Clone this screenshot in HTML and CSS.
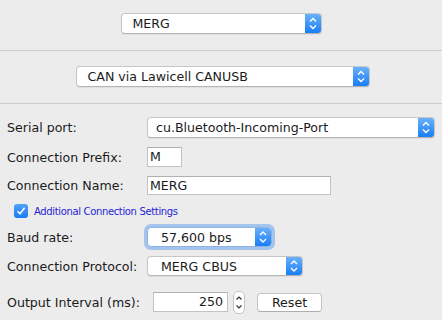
FILE: index.html
```html
<!DOCTYPE html>
<html lang="en">
<head>
  <meta charset="UTF-8" />
  <title>Connection Settings</title>
  <link rel="stylesheet" href="styles.css">
</head>
<body>

  <div class="pane">

    <!-- System manufacturer -->
    <div class="top">
      <div class="select sel-merg">
        <span class="sel-text">MERG</span>
        <span class="sel-arrows"><svg viewBox="0 0 16 21" width="16" height="21"><path d="M5 8.5L8 5.5L11 8.5M5 12.5L8 15.5L11 12.5"/></svg></span>
      </div>
    </div>
    <div class="sep"></div>

    <!-- Connection type -->
    <div class="mid">
      <div class="select sel-can">
        <span class="sel-text">CAN via Lawicell CANUSB</span>
        <span class="sel-arrows"><svg viewBox="0 0 16 21" width="16" height="21"><path d="M5 8.5L8 5.5L11 8.5M5 12.5L8 15.5L11 12.5"/></svg></span>
      </div>
    </div>
    <div class="sep"></div>

    <!-- Settings form -->
    <div class="form">
      <div class="row r-serial">
        <span class="label">Serial port:</span>
        <div class="select sel-serial">
          <span class="sel-text">cu.Bluetooth-Incoming-Port</span>
          <span class="sel-arrows"><svg viewBox="0 0 16 21" width="16" height="21"><path d="M5 8.5L8 5.5L11 8.5M5 12.5L8 15.5L11 12.5"/></svg></span>
        </div>
      </div>

      <div class="row r-prefix">
        <span class="label">Connection Prefix:</span>
        <div class="input in-prefix">M</div>
      </div>

      <div class="row r-name">
        <span class="label">Connection Name:</span>
        <div class="input in-name">MERG</div>
      </div>

      <div class="row r-check">
        <span class="checkbox"><svg viewBox="0 0 14 14" width="14" height="14"><path d="M3.5 7.2L6 9.8L10.6 3.8"/></svg></span>
        <span class="check-text">Additional Connection Settings</span>
      </div>

      <div class="row r-baud">
        <span class="label">Baud rate:</span>
        <div class="select sel-baud focused">
          <span class="sel-text">57,600 bps</span>
          <span class="sel-arrows"><svg viewBox="0 0 16 20" width="16" height="20"><path d="M5 8L8 5L11 8M5 12L8 15L11 12"/></svg></span>
        </div>
      </div>

      <div class="row r-proto">
        <span class="label">Connection Protocol:</span>
        <div class="select sel-proto">
          <span class="sel-text">MERG CBUS</span>
          <span class="sel-arrows"><svg viewBox="0 0 16 20" width="16" height="20"><path d="M5 8L8 5L11 8M5 12L8 15L11 12"/></svg></span>
        </div>
      </div>

      <div class="row r-output">
        <span class="label label-output">Output Interval (ms):</span>
        <div class="input in-output">250</div>
        <span class="stepper"><svg viewBox="0 0 12 23" width="12" height="23"><path d="M3.5 8.5L6 6L8.5 8.5M3.5 14.5L6 17L8.5 14.5"/></svg></span>
        <button class="btn-reset">Reset</button>
      </div>
    </div>

  </div>

</body>
</html>
```

FILE: styles.css
```css
body {
  margin: 0;
  background: #ececec;
  font-family: "DejaVu Sans", "Liberation Sans", sans-serif;
  font-size: 12.6px;
  color: #1b1b1b;
}

.pane {
  width: 442px;
  height: 320px;
  overflow: hidden;
}

.sep {
  height: 1px;
  background: #cdcdcd;
}

.top {
  height: 50px;
  box-sizing: border-box;
  padding-top: 13px;
  display: flex;
  justify-content: center;
}

.mid {
  height: 52px;
  box-sizing: border-box;
  padding-top: 15px;
  display: flex;
  justify-content: center;
  padding-left: 3px;
}

/* popup buttons */
.select {
  display: flex;
  align-items: center;
  height: 21px;
  box-sizing: border-box;
  background: #fff;
  border: 1px solid #c6c6c6;
  border-bottom-color: #b4b4b4;
  border-radius: 4px;
  box-shadow: 0 1px 1px rgba(0, 0, 0, 0.06);
  overflow: hidden;
}

.sel-text {
  flex: 1;
  padding-left: 11px;
  white-space: nowrap;
}

.sel-arrows {
  width: 16px;
  height: 100%;
  display: flex;
  align-items: center;
  justify-content: center;
  background: linear-gradient(#69b1fa, #1a7df6);
}

.sel-arrows svg path {
  fill: none;
  stroke: #fff;
  stroke-width: 1.4;
}

.sel-merg { width: 201px; }
.sel-can { width: 294px; }
.sel-serial { width: 288px; }
.sel-serial .sel-text { padding-left: 8px; }
.sel-baud { width: 125px; height: 20px; }
.sel-proto { width: 156px; height: 20px; }
.sel-baud .sel-text,
.sel-proto .sel-text { padding-left: 13px; }

.focused {
  box-shadow: 0 0 0 3px rgba(108, 164, 236, 0.55);
  border-color: #8fb2e4;
}

/* form */
.form {
  padding-top: 13px;
}

.row {
  display: flex;
  align-items: center;
  padding-left: 7px;
}

.label {
  width: 140px;
  flex-shrink: 0;
}

.r-serial { height: 21px; }
.r-prefix { height: 20px; margin-top: 9px; }
.r-name { height: 20px; margin-top: 8px; }
.r-check { height: 14px; margin-top: 9px; padding-left: 14px; }
.r-baud { height: 20px; margin-top: 9px; }
.r-proto { height: 20px; margin-top: 9px; }
.r-output { height: 20px; margin-top: 16px; }

.input {
  height: 20px;
  box-sizing: border-box;
  background: #fff;
  border: 1px solid #c2c2c2;
  border-top-color: #b0b0b0;
  padding-left: 2px;
  line-height: 18px;
  white-space: nowrap;
}

.in-prefix { width: 35px; }
.in-name { width: 184px; height: 19px; line-height: 17px; }

.label-output { width: 146px; }
.in-output {
  width: 75px;
  text-align: right;
  padding-right: 4px;
  padding-left: 0;
}

.stepper {
  margin-left: 5px;
  width: 12px;
  height: 23px;
  box-sizing: border-box;
  background: #fff;
  border: 1px solid #c4c4c4;
  border-radius: 5px;
  display: flex;
  align-items: center;
  justify-content: center;
}

.stepper svg {
  flex-shrink: 0;
}

.stepper svg path {
  fill: none;
  stroke: #333;
  stroke-width: 1.2;
}

.btn-reset {
  margin-left: 12px;
  width: 65px;
  height: 19px;
  padding: 0;
  background: #fff;
  border: 1px solid #c4c4c4;
  border-bottom-color: #adadad;
  border-radius: 4px;
  font-family: inherit;
  font-size: 12.6px;
  color: #1b1b1b;
}

/* checkbox */
.checkbox {
  width: 14px;
  height: 14px;
  border-radius: 3px;
  background: linear-gradient(#4fa1f9, #1a7bf5);
  display: flex;
}

.checkbox svg path {
  fill: none;
  stroke: #fff;
  stroke-width: 1.6;
}

.check-text {
  margin-left: 6px;
  font-size: 10px;
  letter-spacing: -0.35px;
  color: #2424d6;
}
```
